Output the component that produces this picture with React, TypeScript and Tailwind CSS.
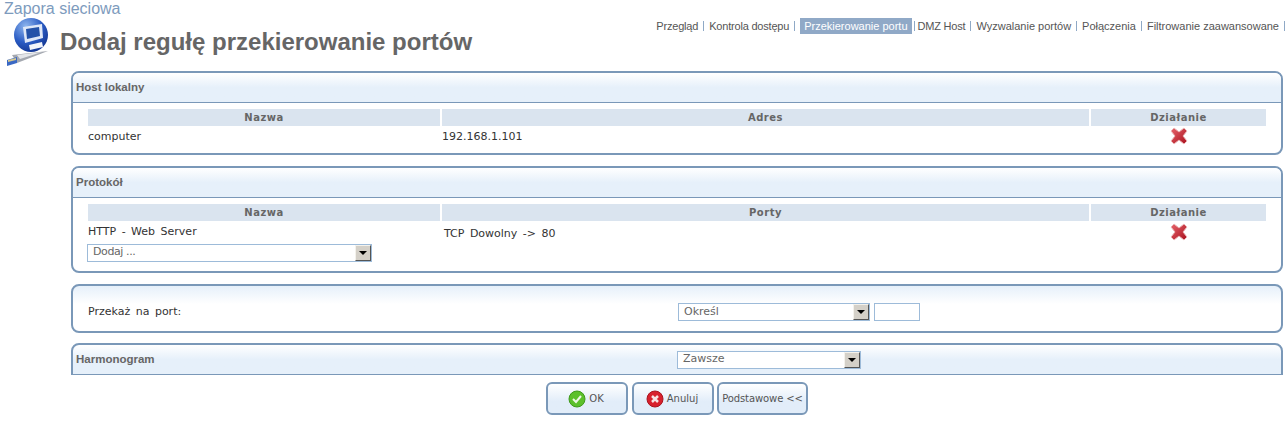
import type { ReactNode } from "react"

const navItems = [
  { label: "Przegląd", tight: true },
  { label: "Kontrola dostępu", tight: true },
  { label: "Przekierowanie portu", tight: false },
  { label: "DMZ Host", tight: true },
  { label: "Wyzwalanie portów", tight: false },
  { label: "Połączenia", tight: false },
  { label: "Filtrowanie zaawansowane", tight: false },
]

function FirewallIcon() {
  return (
    <svg width="50" height="52" viewBox="0 0 50 52" className="shrink-0">
      <defs>
        <radialGradient id="globe" cx="0.35" cy="0.25" r="0.85">
          <stop offset="0" stopColor="#8fb6ee" />
          <stop offset="0.55" stopColor="#2a5cc4" />
          <stop offset="1" stopColor="#0f2f8a" />
        </radialGradient>
      </defs>
      <path d="M12 38l36 -4 -31 12z" fill="#a4a8b0" />
      <path d="M17 38l25 -3 -22 7z" fill="#e4e6ea" />
      <circle cx="31" cy="18" r="17" fill="url(#globe)" />
      <path d="M23 10l19 -3 1 14 -18 5z" fill="#dfe8f8" />
      <path d="M26 12l13 -2 1 9 -13 3z" fill="#2452a8" />
      <path d="M29 28l13 -3 1 5 -13 3z" fill="#f2f5fb" />
      <path d="M7 43l10 -3 0 6 -10 3z" fill="#3a68c4" />
      <path d="M8 43l8 -2 0 2 -8 2z" fill="#d7c98f" />
    </svg>
  )
}

function DeleteIcon() {
  return (
    <svg width="18" height="18" viewBox="0 0 18 18">
      <defs>
        <linearGradient id="deleteFill" x1="0" y1="0" x2="1" y2="1">
          <stop offset="0" stopColor="#e8656c" />
          <stop offset="1" stopColor="#a80f1c" />
        </linearGradient>
      </defs>
      <path
        d="M4 1l5 4 5 -4 3 3 -4 5 4 5 -3 3 -5 -4 -5 4 -3 -3 4 -5 -4 -5z"
        fill="url(#deleteFill)"
        stroke="#eab4b6"
        strokeWidth="1"
      />
    </svg>
  )
}

function Dropdown({ label, className }: { label: string; className: string }) {
  return (
    <div className={`flex h-[18px] items-center justify-between border border-[#9dbbd9] bg-white pl-[5px] text-[11px] text-[#666] ${className}`}>
      <span>{label}</span>
      <span className="flex h-4 w-4 items-center justify-center border border-t-[#f4f2ec] border-l-[#f4f2ec] border-r-[#555] border-b-[#555] bg-[#d4d0c8] tracking-normal">
        <span className="h-0 w-0 border-x-[4px] border-t-[4px] border-x-transparent border-t-black" />
      </span>
    </div>
  )
}

function Panel({ title, children, className = "" }: { title: string; children: ReactNode; className?: string }) {
  return (
    <section className={`overflow-hidden rounded-lg border-2 border-[#7a98b8] bg-white ${className}`}>
      <h2 className="flex h-[30px] items-center border-b border-[#7a98b8] bg-gradient-to-b from-white from-0% to-[#e6f0fa] to-50% pl-[3px] font-['Liberation_Sans',sans-serif] text-[11.5px] font-bold text-[#666]">
        {title}
      </h2>
      {children}
    </section>
  )
}

function HeaderCells({ middle }: { middle: string }) {
  return (
    <>
      {["Nazwa", middle, "Działanie"].map((cell) => (
        <div key={cell} className="flex h-[17px] items-center justify-center bg-[#dae4ef] text-[10px] font-bold tracking-[0.5px] text-[#666]">
          {cell}
        </div>
      ))}
    </>
  )
}

function ActionButton({ children, className }: { children: ReactNode; className: string }) {
  return (
    <button className={`flex h-[33px] items-center justify-center gap-[3px] rounded-md border-2 border-[#7a98b8] bg-gradient-to-b from-white to-[#e2edf9] to-60% text-[10px] text-[#555] ${className}`}>
      {children}
    </button>
  )
}

export default function App() {
  return (
    <div className="h-[424px] w-[1288px] overflow-hidden bg-white font-['DejaVu_Sans',sans-serif] text-[#333]">
      <header className="flex h-[71px] justify-between">
        <div>
          <div className="pl-1 font-['Liberation_Sans',sans-serif] text-[16px] leading-[17px] text-[#7d9bbd]">Zapora sieciowa</div>
          <div className="flex items-start">
            <FirewallIcon />
            <h1 className="mt-[11px] pl-[10px] font-['Liberation_Sans',sans-serif] text-[24px] leading-[28px] font-bold text-[#666]">
              Dodaj regułę przekierowanie portów
            </h1>
          </div>
        </div>
        <nav className="mt-[18px] flex h-4 items-center font-['Liberation_Sans',sans-serif] text-[11px] text-[#555]">
          {navItems.map(({ label, tight }, index) => {
            const active = label === "Przekierowanie portu"
            return (
              <span key={label} className="flex items-center">
                <span className={active ? "flex h-4 items-center bg-[#90a9c7] px-1 text-white" : tight ? "tracking-[-0.2px]" : ""}>{label}</span>
                <span className={`h-2.5 w-px bg-[#8fa9c6] ${active ? "mr-[3px] ml-[2px]" : index === navItems.length - 1 ? "mr-[3px] ml-[5px]" : "mx-[5px]"}`} />
              </span>
            )
          })}
        </nav>
      </header>

      <main className="flex flex-col pr-[5px] pl-[71px]">
        <Panel title="Host lokalny" className="h-[84px]">
          <div className="mt-1.5 grid grid-cols-[352px_647px_175px] gap-x-[2px] px-[15px] [word-spacing:2px]">
            <HeaderCells middle="Adres" />
            <div className="pt-[3px] text-[11px]">computer</div>
            <div className="pt-[3px] text-[11px]">192.168.1.101</div>
            <div className="flex justify-center pt-px"><DeleteIcon /></div>
          </div>
        </Panel>

        <Panel title="Protokół" className="mt-[11px] h-[107px]">
          <div className="mt-1.5 grid grid-cols-[352px_647px_175px] gap-x-[2px] px-[15px] [word-spacing:2px]">
            <HeaderCells middle="Porty" />
            <div className="pt-[3px] text-[11px]">HTTP - Web Server</div>
            <div className="pt-[5px] pl-0.5 text-[11px]">TCP Dowolny -&gt; 80</div>
            <div className="flex justify-center pt-[2px]"><DeleteIcon /></div>
          </div>
          <Dropdown label="Dodaj ..." className="mt-px ml-[14px] w-[285px] tracking-[-0.4px]" />
        </Panel>

        <section className="mt-[11px] flex h-[49px] items-center rounded-lg border-2 border-[#7a98b8] bg-gradient-to-b from-[#e6f0fa] to-white to-40% pt-[7px] pl-[15px]">
          <span className="w-[590px] text-[11px] [word-spacing:2px]">Przekaż na port:</span>
          <Dropdown label="Określ" className="w-[192px]" />
          <div className="ml-1 h-[18px] w-[46px] border border-[#9dbbd9] bg-white" />
        </section>

        <section className="mt-[10px] flex h-[32px] items-center rounded-t-lg border-x-2 border-t-2 border-b border-[#7a98b8] bg-gradient-to-b from-white to-[#e6f0fa] to-50% pl-[3px]">
          <h2 className="w-[601px] font-['Liberation_Sans',sans-serif] text-[11.5px] font-bold text-[#666]">Harmonogram</h2>
          <Dropdown label="Zawsze" className="w-[184px]" />
        </section>

        <div className="mt-[7px] flex pl-[475px]">
          <ActionButton className="w-[82px] pr-[2px]">
            <svg width="18" height="18" viewBox="0 0 18 18">
              <circle cx="9" cy="9" r="8" fill="#5cc02c" stroke="#3f9a1c" />
              <path d="M5 9l3 3 5 -6" fill="none" stroke="#eef7e6" strokeWidth="2" />
            </svg>
            OK
          </ActionButton>
          <ActionButton className="ml-1 w-[82px] pr-[2px]">
            <svg width="18" height="18" viewBox="0 0 18 18">
              <circle cx="9" cy="9" r="8" fill="#d8202c" stroke="#a8141e" />
              <path d="M6 6l6 6m0 -6l-6 6" fill="none" stroke="#f6e3e3" strokeWidth="2.500" />
            </svg>
            Anuluj
          </ActionButton>
          <ActionButton className="ml-[3px] w-[91px] tracking-[-0.1px]">Podstawowe &lt;&lt;</ActionButton>
        </div>
      </main>
    </div>
  )
}
